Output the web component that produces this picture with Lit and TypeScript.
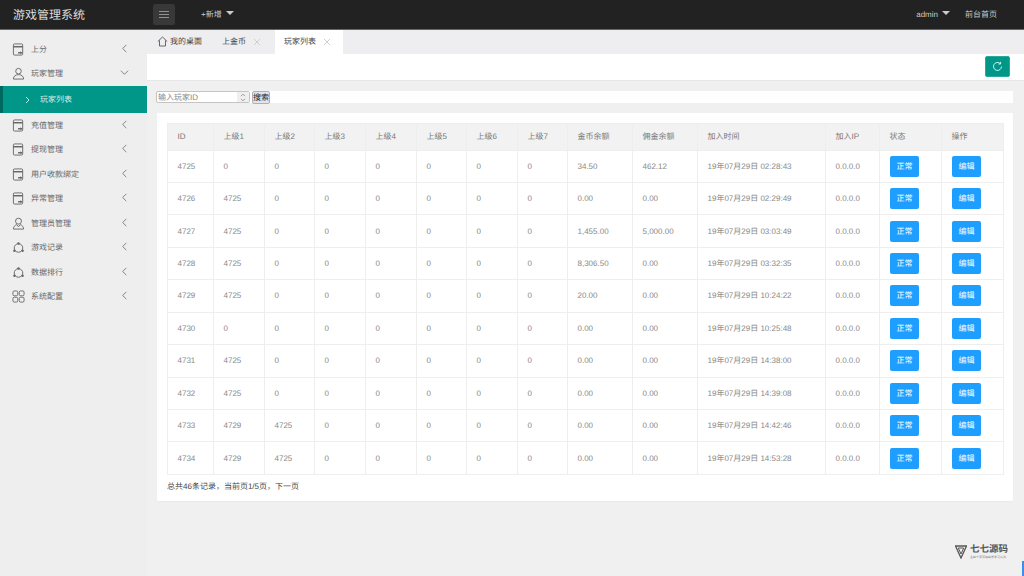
import { LitElement, html, css, svg } from "lit";
import { customElement } from "lit/decorators.js";

const font = css`"Liberation Sans", "Noto Sans CJK SC", sans-serif`;

const docIcon = svg`<rect x="1.5" y="1" width="10" height="12" rx="1.2" fill="none" stroke="#666" stroke-width="1"/><path d="M1.5 4h10" stroke="#666" stroke-width="1.6"/><path d="M6.500 10.500h4" stroke="#666" stroke-width="1.500"/><path d="M9 8.800l2.200 1.700L9 12.200" fill="#666"/>`;
const userIcon = svg`<circle cx="7" cy="4.500" r="3" fill="none" stroke="#666" stroke-width="1"/><path d="M1.500 13c0-3 2.200-4.800 5.500-4.800s5.500 1.800 5.500 4.800z" fill="none" stroke="#666" stroke-width="1"/>`;
const adminIcon = svg`<circle cx="7" cy="4.500" r="3.200" fill="none" stroke="#666" stroke-width="1"/><path d="M1.500 13c0-2.500 1.500-4 3.500-4.800M12.500 13c0-2.500-1.500-4-3.500-4.800M1.500 13h11M5 8.200l2 2.300 2-2.300" fill="none" stroke="#666" stroke-width="1"/>`;
const gameIcon = svg`<circle cx="7" cy="7.500" r="4.600" fill="none" stroke="#666" stroke-width="1"/><circle cx="7" cy="2.700" r="1.300" fill="#666"/><circle cx="2.600" cy="10.500" r="1.300" fill="#666"/><circle cx="11.400" cy="10.500" r="1.300" fill="#666"/>`;
const gridIcon = svg`<rect x="1" y="1" width="5.200" height="5.200" rx="1.500" fill="none" stroke="#666" stroke-width="1"/><rect x="7.800" y="1" width="5.200" height="5.200" rx="1.500" fill="none" stroke="#666" stroke-width="1"/><rect x="1" y="7.800" width="5.200" height="5.200" rx="1.500" fill="none" stroke="#666" stroke-width="1"/><rect x="7.800" y="7.800" width="5.200" height="5.200" rx="1.500" fill="none" stroke="#666" stroke-width="1"/>`;

const menu = [
  { label: "上分", icon: docIcon },
  { label: "玩家管理", icon: userIcon, open: true },
  { label: "玩家列表", sub: true },
  { label: "充值管理", icon: docIcon },
  { label: "提现管理", icon: docIcon },
  { label: "用户收款绑定", icon: docIcon },
  { label: "异常管理", icon: docIcon },
  { label: "管理员管理", icon: adminIcon },
  { label: "游戏记录", icon: gameIcon },
  { label: "数据排行", icon: gameIcon },
  { label: "系统配置", icon: gridIcon },
];

const cols = [46, 51, 50, 51, 51, 50, 51, 50, 65, 65, 128, 54, 62, 62];
const heads = ["ID", "上级1", "上级2", "上级3", "上级4", "上级5", "上级6", "上级7", "金币余额", "佣金余额", "加入时间", "加入IP", "状态", "操作"];
const rows = [
  ["4725", "0", "0", "34.50", "462.12", "02:28:43"],
  ["4726", "4725", "0", "0.00", "0.00", "02:29:49"],
  ["4727", "4725", "0", "1,455.00", "5,000.00", "03:03:49"],
  ["4728", "4725", "0", "8,306.50", "0.00", "03:32:35"],
  ["4729", "4725", "0", "20.00", "0.00", "10:24:22"],
  ["4730", "0", "0", "0.00", "0.00", "10:25:48"],
  ["4731", "4725", "0", "0.00", "0.00", "14:38:00"],
  ["4732", "4725", "0", "0.00", "0.00", "14:39:08"],
  ["4733", "4729", "4725", "0.00", "0.00", "14:42:46"],
  ["4734", "4729", "4725", "0.00", "0.00", "14:53:28"],
];

@customElement("app-root")
export class AppRoot extends LitElement {
  static styles = css`
    :host { display: block; width: 1024px; height: 576px; overflow: hidden; background: #f0f0f0; font-family: ${font}; font-size: 8px; color: #666; position: relative; text-rendering: geometricPrecision; }
    * { box-sizing: border-box; }
    .top { height: 30px; background: #222; border-bottom: 1px solid #666; display: flex; align-items: center; color: #ccc; }
    .brand { width: 153px; padding-left: 13px; font-size: 12px; color: #ddd; }
    .burger { width: 22px; height: 21px; margin-top: -1px; background: #383838; border-radius: 2px; display: flex; align-items: center; justify-content: center; }
    .add { margin-left: 26px; display: flex; align-items: center; gap: 4px; }
    .caret { width: 0; height: 0; border-left: 4px solid transparent; border-right: 4px solid transparent; border-top: 4px solid #ccc; margin-top: -4px; }
    .right { margin-left: auto; display: flex; align-items: center; padding-right: 27px; }
    .admin { display: flex; align-items: center; gap: 4px; margin-right: 15px; }
    .body { display: flex; height: 546px; }
    .side { width: 147px; background: #eee; padding-top: 7px; flex: none; }
    .item { height: 24.500px; display: flex; align-items: center; padding-left: 12px; color: #666; }
    .item svg.ic { width: 13px; height: 13px; margin-right: 6px; flex: none; }
    .item .lab { white-space: nowrap; }
    .item .chev { margin-left: auto; margin-right: 18px; width: 9px; height: 9px; flex: none; margin-top: -2px; }
    .item.sub { height: 27px; background: #009688; color: #d8efec; border-left: 3px solid #00695f; padding-left: 21px; }
    .item.sub .arrow { width: 7px; height: 8px; margin-right: 9px; }
    .main { flex: 1; min-width: 0; display: flex; flex-direction: column; }
    .tabs { height: 24px; background: #eeeef0; display: flex; align-items: stretch; color: #444; }
    .tab { display: flex; align-items: center; white-space: nowrap; flex: none; padding-bottom: 1px; }
    .tab.home { width: 75px; padding-left: 10px; gap: 2px; }
    .tab.gold { width: 53px; }
    .tab .x { margin-left: 7px; width: 8px; height: 8px; }
    .tab.on { background: #fff; width: 68px; padding-left: 9px; }
    .bar { height: 27px; background: #fff; border-bottom: 1px solid #e6e6e6; display: flex; align-items: center; justify-content: flex-end; padding-right: 14px; }
    .refresh { width: 25px; height: 21px; background: #009688; border: 1px solid #27a99c; border-radius: 2px; display: flex; align-items: center; justify-content: center; margin-top: -1px; }
    .content { padding: 10px 11px 0 10px; display: flex; flex-direction: column; }
    .search { height: 12px; background: #fff; display: flex; align-items: center; }
    .input { width: 94px; height: 12px; background: #fff; border: 1px solid #c4c4c4; border-radius: 2px; display: flex; align-items: center; padding-left: 1px; color: #888; margin-left: -1px; }
    .input .t { flex: 1; }
    .spin { width: 12px; height: 10px; background: #efefef; display: flex; align-items: center; justify-content: center; }
    .go { width: 18px; height: 13px; margin-left: 2px; background: #e4e4e8; border: 1px solid #b0b0b4; border-radius: 2px; color: #222; display: flex; align-items: center; justify-content: center; white-space: nowrap; flex: none; }
    .card { margin-top: 10px; height: 388px; background: #fff; border-radius: 1px; padding: 10px 9px 0 10px; box-shadow: 0 1px 1px #eaeaea; }
    table { border-collapse: collapse; table-layout: fixed; width: 837px; }
    th, td { border: 1px solid #eee; padding: 0 0 0 9.500px; text-align: left; font-weight: 400; white-space: nowrap; overflow: hidden; }
    th { height: 26.500px; background: #f2f2f2; color: #777; }
    td { height: 32.450px; color: #888; }
    td.act { padding-left: 10px; }
    .btn { width: 29px; height: 21px; background: #1e9fff; color: #fff; border-radius: 2px; display: flex; align-items: center; justify-content: center; }
    .foot { margin-top: 6px; color: #444; }
    .logo { position: absolute; right: 16px; bottom: 17px; display: flex; align-items: flex-start; gap: 3px; color: #555; }
    .logo .n { font-family: "Liberation Serif", "Noto Sans CJK SC", serif; font-size: 9.500px; font-weight: 700; line-height: 10px; }
    .logo .c { font-size: 3px; line-height: 4px; color: #777; white-space: nowrap; }
    .edge { position: absolute; right: 0; bottom: 0; width: 2px; height: 15px; background: #3b8eea; }
  `;

  private chev(open: boolean) {
    return html`<svg class="chev" viewBox="0 0 10 10"><path d=${open ? "M1 3l4 4 4-4" : "M7 1L3 5l4 4"} fill="none" stroke="#777" stroke-width="1"/></svg>`;
  }

  private x() {
    return html`<svg class="x" viewBox="0 0 8 8"><path d="M1 1l6 6M7 1L1 7" stroke="#c4c4c4" stroke-width=".8"/></svg>`;
  }

  render() {
    return html`
      <div class="top">
        <div class="brand">游戏管理系统</div>
        <div class="burger"><svg width="10" height="7" viewBox="0 0 10 7"><path d="M0 .5h10M0 3.500h10M0 6.500h10" stroke="#aaa" stroke-width=".8"/></svg></div>
        <div class="add"><span>+新增</span><i class="caret"></i></div>
        <div class="right">
          <div class="admin"><span>admin</span><i class="caret"></i></div>
          <span>前台首页</span>
        </div>
      </div>
      <div class="body">
        <nav class="side">
          ${menu.map((m) =>
            m.sub
              ? html`<div class="item sub"><svg class="arrow" viewBox="0 0 7 8"><path d="M2 1l3 3-3 3" fill="none" stroke="#d8efec" stroke-width=".9"/></svg>${m.label}</div>`
              : html`<div class="item"><svg class="ic" viewBox="0 0 14 14">${m.icon}</svg><span class="lab">${m.label}</span>${this.chev(!!m.open)}</div>`
          )}
        </nav>
        <div class="main">
          <div class="tabs">
            <div class="tab home"><svg width="11" height="11" viewBox="0 0 11 11"><path d="M.8 5.500L5.500 1l4.700 4.500M2.500 4.500V10h6V4.500" fill="none" stroke="#444" stroke-width=".8"/></svg>我的桌面</div>
            <div class="tab gold">上金币${this.x()}</div>
            <div class="tab on">玩家列表${this.x()}</div>
          </div>
          <div class="bar">
            <div class="refresh"><svg width="11" height="11" viewBox="0 0 11 11"><path d="M9.500 5.500a4 4 0 1 1-1.300-3" fill="none" stroke="#dff" stroke-width=".9"/><path d="M8.600.8v2.200H6.400" fill="none" stroke="#dff" stroke-width=".9"/></svg></div>
          </div>
          <div class="content">
            <div class="search">
              <div class="input"><span class="t">输入玩家ID</span><span class="spin"><svg width="6" height="9" viewBox="0 0 6 9"><path d="M1 3.200l2-2 2 2M1 5.800l2 2 2-2" fill="none" stroke="#777" stroke-width=".7"/></svg></span></div>
              <div class="go">搜索</div>
            </div>
            <div class="card">
              <table>
                <colgroup>${cols.map((w) => html`<col style="width:${w}px" />`)}</colgroup>
                <thead><tr>${heads.map((h) => html`<th>${h}</th>`)}</tr></thead>
                <tbody>
                  ${rows.map((r) => html`<tr>
                    <td>${r[0]}</td><td>${r[1]}</td><td>${r[2]}</td>
                    <td>0</td><td>0</td><td>0</td><td>0</td><td>0</td>
                    <td>${r[3]}</td><td>${r[4]}</td>
                    <td>19年07月29日 ${r[5]}</td><td>0.0.0.0</td>
                    <td class="act"><div class="btn">正常</div></td><td class="act"><div class="btn">编辑</div></td>
                  </tr>`)}
                </tbody>
              </table>
              <div class="foot">总共46条记录，当前页1/5页，下一页</div>
            </div>
          </div>
        </div>
      </div>
      <div class="logo">
        <svg width="12" height="14" viewBox="0 0 12 14"><path d="M.5 1h11L6 13z" fill="none" stroke="#555" stroke-width="1.300"/><path d="M3.300 3h5.400L6 9z" fill="none" stroke="#555" stroke-width="1"/></svg>
        <div><div class="n">七七源码</div><div class="c">全站十字资源站长学习交流</div></div>
      </div>
      <div class="edge"></div>
    `;
  }
}
